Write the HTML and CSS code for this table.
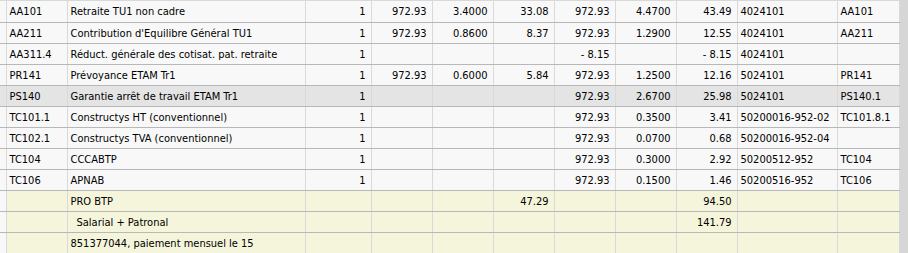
FILE: index.html
```html
<!DOCTYPE html>
<html>
<head>
<meta charset="utf-8">
<link rel="stylesheet" href="styles.css">
</head>
<body>
<div class="frame">
<table class="grid">
<colgroup>
<col class="c-edge"><col class="c-code"><col class="c-label"><col class="c-num"><col class="c-amt"><col class="c-amt"><col class="c-amt"><col class="c-amt"><col class="c-amt"><col class="c-amt"><col class="c-acct"><col class="c-ref">
</colgroup>
<tbody>
<tr class="first"><td></td><td>AA101</td><td>Retraite TU1 non cadre</td><td class="r">1</td><td class="r">972.93</td><td class="r">3.4000</td><td class="r">33.08</td><td class="r">972.93</td><td class="r">4.4700</td><td class="r">43.49</td><td>4024101</td><td>AA101</td></tr>
<tr><td></td><td>AA211</td><td>Contribution d'Equilibre Général TU1</td><td class="r">1</td><td class="r">972.93</td><td class="r">0.8600</td><td class="r">8.37</td><td class="r">972.93</td><td class="r">1.2900</td><td class="r">12.55</td><td>4024101</td><td>AA211</td></tr>
<tr><td></td><td>AA311.4</td><td>Réduct. générale des cotisat. pat. retraite</td><td class="r">1</td><td></td><td></td><td></td><td class="r">- 8.15</td><td></td><td class="r">- 8.15</td><td>4024101</td><td></td></tr>
<tr><td></td><td>PR141</td><td>Prévoyance ETAM Tr1</td><td class="r">1</td><td class="r">972.93</td><td class="r">0.6000</td><td class="r">5.84</td><td class="r">972.93</td><td class="r">1.2500</td><td class="r">12.16</td><td>5024101</td><td>PR141</td></tr>
<tr class="sel"><td></td><td>PS140</td><td>Garantie arrêt de travail ETAM Tr1</td><td class="r">1</td><td></td><td></td><td></td><td class="r">972.93</td><td class="r">2.6700</td><td class="r">25.98</td><td>5024101</td><td>PS140.1</td></tr>
<tr><td></td><td>TC101.1</td><td>Constructys HT (conventionnel)</td><td class="r">1</td><td></td><td></td><td></td><td class="r">972.93</td><td class="r">0.3500</td><td class="r">3.41</td><td>50200016-952-02</td><td>TC101.8.1</td></tr>
<tr><td></td><td>TC102.1</td><td>Constructys TVA (conventionnel)</td><td class="r">1</td><td></td><td></td><td></td><td class="r">972.93</td><td class="r">0.0700</td><td class="r">0.68</td><td>50200016-952-04</td><td></td></tr>
<tr><td></td><td>TC104</td><td>CCCABTP</td><td class="r">1</td><td></td><td></td><td></td><td class="r">972.93</td><td class="r">0.3000</td><td class="r">2.92</td><td>50200512-952</td><td>TC104</td></tr>
<tr><td></td><td>TC106</td><td>APNAB</td><td class="r">1</td><td></td><td></td><td></td><td class="r">972.93</td><td class="r">0.1500</td><td class="r">1.46</td><td>50200516-952</td><td>TC106</td></tr>
<tr class="sum"><td></td><td></td><td>PRO BTP</td><td></td><td></td><td></td><td class="r">47.29</td><td></td><td></td><td class="r">94.50</td><td></td><td></td></tr>
<tr class="sum"><td></td><td></td><td class="indent">Salarial + Patronal</td><td></td><td></td><td></td><td></td><td></td><td></td><td class="r">141.79</td><td></td><td></td></tr>
<tr class="sum"><td></td><td></td><td>851377044, paiement mensuel le 15</td><td></td><td></td><td></td><td></td><td></td><td></td><td></td><td></td><td></td></tr>
</tbody>
</table>
<div class="scrollbar"></div>
</div>
</body>
</html>
```
FILE: styles.css
```css
html, body {
  margin: 0;
  padding: 0;
  background: #f8f8f8;
}
.frame {
  display: flex;
  width: 908px;
  height: 253px;
  overflow: hidden;
}
.grid {
  width: 899px;
  flex: none;
  table-layout: fixed;
  border-collapse: collapse;
  font-family: "DejaVu Sans Condensed", "DejaVu Sans", sans-serif;
  font-size: 11px;
  color: #000;
  border-top: 1px solid #d8d8d8;
}
.c-edge { width: 6px; }
.c-code { width: 61px; }
.c-label { width: 238px; }
.c-num { width: 66px; }
.c-amt { width: 61px; }
.c-acct { width: 100px; }
.c-ref { width: 62px; }
.grid td {
  height: 20px;
  padding: 0 3px;
  white-space: nowrap;
  overflow: hidden;
  border-bottom: 1px solid #b8b8b8;
  border-left: 1px solid #d9d9d9;
  border-right: 1px solid #d9d9d9;
  background: #f8f8f8;
}
.grid td:first-child {
  border-left: none;
  padding: 0;
}
.grid tr.first td { height: 21px; }
.grid td.r {
  text-align: right;
  padding-right: 5px;
}
.grid tr.sel td { background: #e4e4e4; }
.grid tr.sum td { background: #f5f5dc; }
.grid tr.sum td:first-child { background: #f8f8f8; }
.grid td.indent { padding-left: 9px; }
.scrollbar {
  flex: 1;
  background: #d6d6d6;
}
```
